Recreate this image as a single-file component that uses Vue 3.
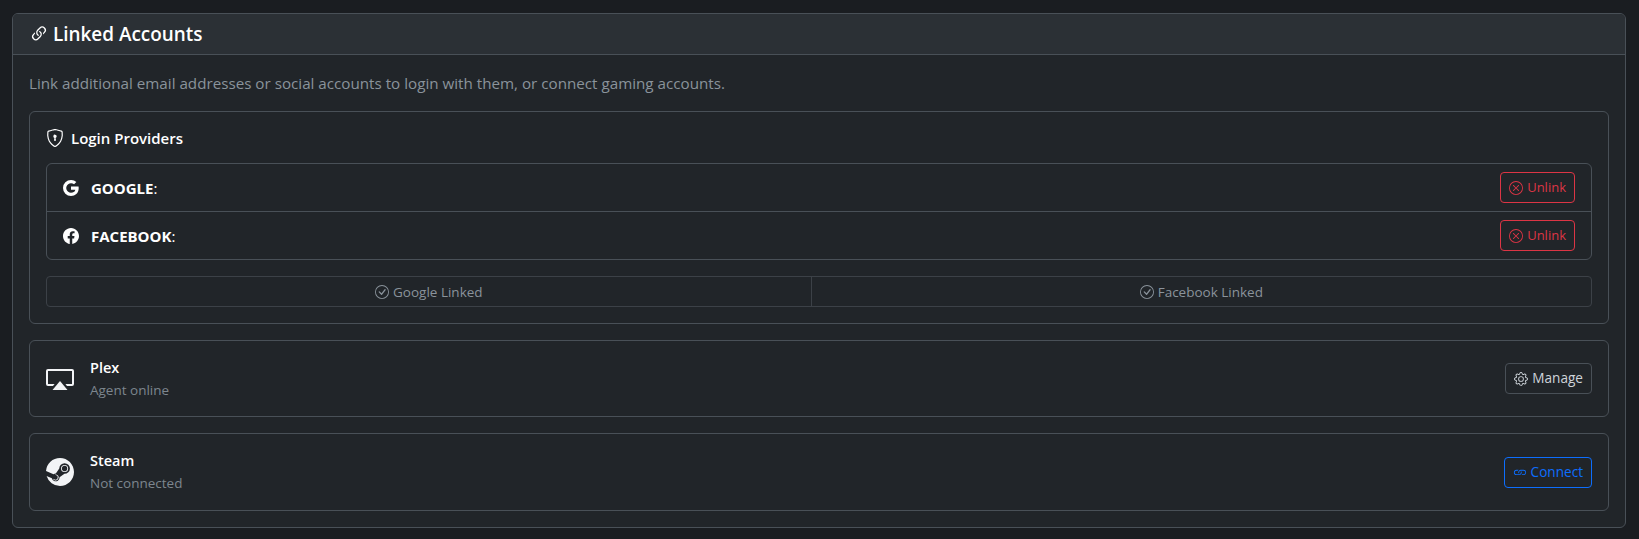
<template>
  <div class="page">
    <section class="card">
      <header class="card-header">
        <svg class="bi" viewBox="0 0 16 16"><path d="M4.715 6.542 3.343 7.914a3 3 0 1 0 4.243 4.243l1.828-1.829A3 3 0 0 0 8.586 5.5L8 6.086a1 1 0 0 0-.154.199 2 2 0 0 1 .861 3.337L6.88 11.45a2 2 0 1 1-2.83-2.83l.793-.792a4 4 0 0 1-.128-1.287z"/><path d="M6.586 4.672A3 3 0 0 0 7.414 9.5l.775-.776a2 2 0 0 1-.896-3.346L9.12 3.55a2 2 0 1 1 2.83 2.83l-.793.792c.112.42.155.855.128 1.287l1.372-1.372a3 3 0 1 0-4.243-4.243z"/></svg>
        <h2>Linked Accounts</h2>
      </header>
      <div class="card-body">
        <p class="intro">Link additional email addresses or social accounts to login with them, or connect gaming accounts.</p>

        <div class="panel providers">
          <div class="providers-title">
            <svg class="bi" viewBox="0 0 16 16"><path d="M5.338 1.59a61 61 0 0 0-2.837.856.48.48 0 0 0-.328.39c-.554 4.157.726 7.19 2.253 9.188a10.7 10.7 0 0 0 2.287 2.233c.346.244.652.42.893.533q.18.085.293.118a1 1 0 0 0 .101.025 1 1 0 0 0 .1-.025q.114-.034.294-.118c.24-.113.547-.29.893-.533a10.7 10.7 0 0 0 2.287-2.233c1.527-1.997 2.807-5.031 2.253-9.188a.48.48 0 0 0-.328-.39c-.651-.213-1.75-.56-2.837-.855C9.552 1.29 8.531 1.067 8 1.067c-.53 0-1.552.223-2.662.524zM5.072.56C6.157.265 7.31 0 8 0s1.843.265 2.928.56c1.11.3 2.229.655 2.887.87a1.54 1.54 0 0 1 1.044 1.262c.596 4.477-.787 7.795-2.465 9.99a11.8 11.8 0 0 1-2.517 2.453 7 7 0 0 1-1.048.625c-.28.132-.581.24-.829.24s-.548-.108-.829-.24a7 7 0 0 1-1.048-.625 11.8 11.8 0 0 1-2.517-2.453C1.928 10.487.545 7.169 1.141 2.692A1.54 1.54 0 0 1 2.185 1.43 63 63 0 0 1 5.072.56"/><path d="M9.5 6.5a1.5 1.5 0 0 1-1 1.415l.385 1.99a.5.5 0 0 1-.491.595h-.788a.5.5 0 0 1-.49-.595l.384-1.99a1.5 1.5 0 1 1 2-1.415"/></svg>
            <span>Login Providers</span>
          </div>

          <ul class="provider-list">
            <li v-for="p in providers" :key="p.name" class="provider-row">
              <svg class="bi provider-icon" viewBox="0 0 16 16"><path :d="p.icon"/></svg>
              <span class="provider-name"><strong>{{ p.name }}</strong>:</span>
              <button type="button" class="btn btn-red">
                <svg class="bi" viewBox="0 0 16 16"><path d="M8 15A7 7 0 1 1 8 1a7 7 0 0 1 0 14m0 1A8 8 0 1 0 8 0a8 8 0 0 0 0 16"/><path d="M4.646 4.646a.5.5 0 0 1 .708 0L8 7.293l2.646-2.647a.5.5 0 0 1 .708.708L8.707 8l2.647 2.646a.5.5 0 0 1-.708.708L8 8.707l-2.646 2.647a.5.5 0 0 1-.708-.708L7.293 8 4.646 5.354a.5.5 0 0 1 0-.708"/></svg>
                Unlink
              </button>
            </li>
          </ul>

          <div class="linked-group">
            <div v-for="l in linked" :key="l" class="linked-item">
              <svg class="bi" viewBox="0 0 16 16"><path d="M8 15A7 7 0 1 1 8 1a7 7 0 0 1 0 14m0 1A8 8 0 1 0 8 0a8 8 0 0 0 0 16"/><path d="m10.97 4.97-.02.022-3.473 4.425-2.093-2.094a.75.75 0 0 0-1.06 1.06L6.97 11.03a.75.75 0 0 0 1.079-.02l3.992-4.99a.75.75 0 0 0-1.071-1.05"/></svg>
              {{ l }}
            </div>
          </div>
        </div>

        <div class="panel account">
          <svg class="account-icon" viewBox="0 0 28 28"><path d="M2 4h24a2 2 0 0 1 2 2v13a2 2 0 0 1-2 2h-5l-1.6-2H26V6H2v13h6.600L7 21H2a2 2 0 0 1-2-2V6a2 2 0 0 1 2-2z"/><path d="M14 16l7.500 9h-15z"/></svg>
          <div class="account-text">
            <div class="account-name">Plex</div>
            <div class="account-status">Agent online</div>
          </div>
          <button type="button" class="btn btn-grey">
            <svg class="bi" viewBox="0 0 16 16"><path d="M8 4.754a3.246 3.246 0 1 0 0 6.492 3.246 3.246 0 0 0 0-6.492M5.754 8a2.246 2.246 0 1 1 4.492 0 2.246 2.246 0 0 1-4.492 0"/><path d="M9.796 1.343c-.527-1.79-3.065-1.79-3.592 0l-.094.319a.873.873 0 0 1-1.255.52l-.292-.16c-1.64-.892-3.433.902-2.54 2.541l.159.292a.873.873 0 0 1-.52 1.255l-.319.094c-1.79.527-1.79 3.065 0 3.592l.319.094a.873.873 0 0 1 .52 1.255l-.16.292c-.892 1.64.901 3.434 2.541 2.54l.292-.159a.873.873 0 0 1 1.255.52l.094.319c.527 1.79 3.065 1.79 3.592 0l.094-.319a.873.873 0 0 1 1.255-.52l.292.16c1.64.893 3.434-.902 2.54-2.541l-.159-.292a.873.873 0 0 1 .52-1.255l.319-.094c1.79-.527 1.79-3.065 0-3.592l-.319-.094a.873.873 0 0 1-.52-1.255l.16-.292c.893-1.64-.902-3.433-2.541-2.54l-.292.159a.873.873 0 0 1-1.255-.52zm-2.633.283c.246-.835 1.428-.835 1.674 0l.094.319a1.873 1.873 0 0 0 2.693 1.115l.291-.16c.764-.415 1.6.42 1.184 1.185l-.159.292a1.873 1.873 0 0 0 1.116 2.692l.318.094c.835.246.835 1.428 0 1.674l-.319.094a1.873 1.873 0 0 0-1.115 2.693l.16.291c.415.764-.42 1.6-1.185 1.184l-.291-.159a1.873 1.873 0 0 0-2.693 1.116l-.094.318c-.246.835-1.428.835-1.674 0l-.094-.319a1.873 1.873 0 0 0-2.692-1.115l-.292.16c-.764.415-1.6-.42-1.184-1.185l.159-.291A1.873 1.873 0 0 0 1.945 8.93l-.319-.094c-.835-.246-.835-1.428 0-1.674l.319-.094A1.873 1.873 0 0 0 3.06 4.377l-.16-.292c-.415-.764.42-1.6 1.185-1.184l.292.159a1.873 1.873 0 0 0 2.692-1.115z"/></svg>
            Manage
          </button>
        </div>

        <div class="panel account account-tall">
          <svg class="account-icon" viewBox="0 0 16 16"><path d="M.329 10.333A8.01 8.01 0 0 0 7.99 16C12.414 16 16 12.418 16 8s-3.586-8-8.009-8A8.006 8.006 0 0 0 0 7.468l.003.006 4.304 1.769A2.2 2.2 0 0 1 5.62 8.88l1.96-2.844-.001-.04a3.046 3.046 0 0 1 3.042-3.043 3.046 3.046 0 0 1 3.042 3.043 3.047 3.047 0 0 1-3.111 3.044l-2.804 2a2.223 2.223 0 0 1-3.075 2.11 2.22 2.22 0 0 1-1.312-1.568L.33 10.333Z"/><path d="M4.868 12.683a1.715 1.715 0 0 0 1.318-3.165 1.7 1.7 0 0 0-1.263-.02l1.023.424a1.261 1.261 0 1 1-.97 2.33l-.99-.41a1.7 1.7 0 0 0 .882.84Zm3.726-6.687a2.03 2.03 0 0 0 2.027 2.029 2.03 2.03 0 0 0 2.027-2.029 2.03 2.03 0 0 0-2.027-2.027 2.03 2.03 0 0 0-2.027 2.027m2.03-1.527a1.524 1.524 0 1 1-.002 3.048 1.524 1.524 0 0 1 .002-3.048"/></svg>
          <div class="account-text">
            <div class="account-name">Steam</div>
            <div class="account-status">Not connected</div>
          </div>
          <button type="button" class="btn btn-blue">
            <svg class="bi" viewBox="0 0 16 16"><path d="M6.354 5.5H4a3 3 0 0 0 0 6h3a3 3 0 0 0 2.83-4H9q-.13 0-.25.031A2 2 0 0 1 7 10.5H4a2 2 0 1 1 0-4h1.535c.218-.376.495-.714.82-1z"/><path d="M9 5.5a3 3 0 0 0-2.83 4h1.098A2 2 0 0 1 9 6.5h3a2 2 0 1 1 0 4h-1.535a4 4 0 0 1-.82 1H12a3 3 0 1 0 0-6z"/></svg>
            Connect
          </button>
        </div>
      </div>
    </section>
  </div>
</template>

<script setup>
const providers = [
  {
    name: 'GOOGLE',
    icon: 'M15.545 6.558a9.4 9.4 0 0 1 .139 1.626c0 2.434-.87 4.492-2.384 5.885h.002C11.978 15.292 10.158 16 8 16A8 8 0 1 1 8 0a7.7 7.7 0 0 1 5.352 2.082l-2.284 2.284A4.35 4.35 0 0 0 8 3.166c-2.087 0-3.86 1.408-4.492 3.304a4.8 4.8 0 0 0 0 3.063h.003c.635 1.893 2.405 3.301 4.492 3.301 1.078 0 2.004-.276 2.722-.764h-.003a3.7 3.7 0 0 0 1.599-2.431H8v-3.08z'
  },
  {
    name: 'FACEBOOK',
    icon: 'M16 8.049c0-4.446-3.582-8.05-8-8.05C3.58 0-.002 3.603-.002 8.05c0 4.017 2.926 7.347 6.75 7.951v-5.625h-2.03V8.05H6.75V6.275c0-2.017 1.195-3.131 3.022-3.131.876 0 1.791.157 1.791.157v1.98h-1.009c-.993 0-1.303.621-1.303 1.258v1.51h2.218l-.354 2.326H9.25V16c3.824-.604 6.75-3.934 6.75-7.951'
  }
]

const linked = ['Google Linked', 'Facebook Linked']
</script>

<style>
html, body {
  margin: 0;
  background: #1a1d21;
}
</style>

<style scoped>
.page {
  padding: 13px 13px 11px 12px;
  font-family: "Open Sans", "Liberation Sans", sans-serif;
  font-size: 14px;
  line-height: 1.5;
  color: #dee2e6;
}

.bi {
  width: 14px;
  height: 14px;
  fill: currentColor;
  flex: none;
}

.card {
  background: #212529;
  border: 1px solid #495057;
  border-radius: 6px;
}

.card-header {
  display: flex;
  align-items: center;
  gap: 4px;
  height: 40px;
  padding: 0 16px;
  background: #2b3035;
  border-bottom: 1px solid #495057;
  border-radius: 5px 5px 0 0;
  color: #fff;
}

.card-header .bi {
  width: 20px;
  height: 20px;
}

.card-header h2 {
  margin: 0;
  font-size: 18.9px;
  font-weight: 600;
}

.card-body {
  padding: 16px;
}

.intro {
  margin: 0 0 16px;
  height: 24px;
  line-height: 24px;
  font-size: 15.2px;
  color: #8a939b;
}

.panel {
  border: 1px solid #495057;
  border-radius: 6px;
  margin-bottom: 16px;
}

.panel:last-child {
  margin-bottom: 0;
}

.providers {
  padding: 16px;
}

.providers-title {
  display: flex;
  align-items: center;
  gap: 7px;
  height: 20px;
  margin-bottom: 15px;
  font-size: 15px;
  font-weight: 600;
  color: #fff;
}

.providers-title .bi {
  width: 18px;
  height: 18px;
}

.provider-list {
  list-style: none;
  margin: 0 0 16px;
  padding: 0;
  border: 1px solid #495057;
  border-radius: 6px;
}

.provider-row {
  display: flex;
  align-items: center;
  height: 47px;
  padding: 0 16px;
  color: #fff;
}

.provider-row + .provider-row {
  border-top: 1px solid #495057;
}

.provider-icon {
  width: 16px;
  height: 16px;
  margin-right: 12px;
}

.provider-name {
  flex: 1;
  padding-top: 2px;
  font-size: 15px;
}

.provider-name strong {
  font-weight: 700;
}

.btn {
  display: inline-flex;
  align-items: center;
  gap: 4px;
  height: 31px;
  padding: 0 8px;
  box-sizing: border-box;
  background: transparent;
  border: 1px solid;
  border-radius: 4px;
  font: inherit;
  font-size: 13px;
  cursor: pointer;
}

.btn-red {
  color: #dc3545;
  border-color: #dc3545;
}

.btn-grey {
  color: #ced4da;
  border-color: #495057;
  font-size: 13.6px;
}

.btn-blue {
  color: #0d6efd;
  border-color: #0d6efd;
  font-size: 13.6px;
}

.linked-group {
  display: flex;
  height: 31px;
  box-sizing: border-box;
  border: 1px solid #3c4147;
  border-radius: 4px;
}

.linked-item {
  flex: 1 1 auto;
  display: flex;
  align-items: center;
  justify-content: center;
  gap: 4px;
  padding-top: 2px;
  box-sizing: border-box;
  font-size: 13.5px;
  color: #8a939b;
}

.linked-item .bi {
  margin-top: -2px;
}

.linked-item + .linked-item {
  border-left: 1px solid #3c4147;
}

.account {
  display: flex;
  align-items: center;
  padding: 0 16px;
  height: 77px;
  box-sizing: border-box;
}

.account-tall {
  height: 78px;
}

.account-icon {
  width: 28px;
  height: 28px;
  flex: none;
  fill: #f2f4f6;
  margin-right: 16px;
}

.account-text {
  flex: 1;
}

.account-name {
  font-weight: 600;
  color: #fff;
  font-size: 14.5px;
  line-height: 20px;
  margin-bottom: 2px;
}

.account-status {
  font-size: 13.5px;
  line-height: 20px;
  color: #7d868e;
}
</style>
